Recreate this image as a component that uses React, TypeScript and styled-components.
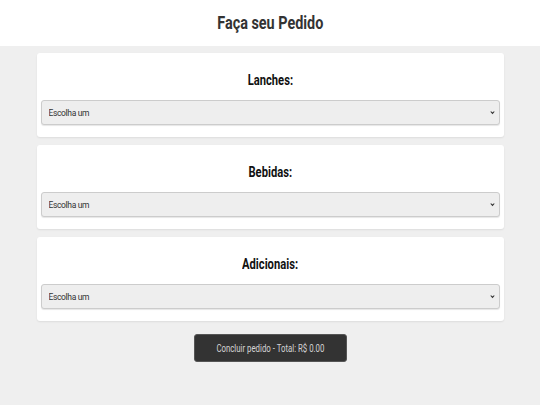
import styled, { createGlobalStyle } from 'styled-components';

const GlobalStyle = createGlobalStyle`
  * {
    margin: 0;
    padding: 0;
    box-sizing: border-box;
  }
  body {
    background: #efefef;
    font-family: Roboto, 'Liberation Sans', sans-serif;
    color: #333;
  }
`;

const Header = styled.header`
  height: 46px;
  background: #fff;
  display: flex;
  align-items: center;
  justify-content: center;
`;

// the reference uses a condensed face, so squeeze the text horizontally
const Condensed = styled.span<{ $scale?: number }>`
  display: inline-block;
  transform: scaleX(${(p) => p.$scale ?? 0.8});
  white-space: nowrap;
`;

const Title = styled.h1`
  font-size: 18px;
  font-weight: 700;
  color: #333;
  line-height: 20px;
`;

const Main = styled.main`
  width: 467px;
  margin: 7px auto 0;
  display: flex;
  flex-direction: column;
  gap: 8px;
`;

const Card = styled.section`
  height: 84px;
  background: #fff;
  border-radius: 3px;
  box-shadow: 0 1px 2px rgba(0, 0, 0, 0.08);
  padding: 19px 4px 12px;
  display: flex;
  flex-direction: column;
  gap: 12px;
`;

const CardTitle = styled.h2`
  font-size: 14px;
  font-weight: 700;
  color: #111;
  text-align: center;
  line-height: 16px;
`;

const SelectWrap = styled.div`
  position: relative;
  height: 25px;
`;

const Select = styled.select`
  appearance: none;
  width: 100%;
  height: 25px;
  background: #eee;
  border: 1px solid #ccc;
  border-radius: 3px;
  padding: 0 7px;
  font-family: inherit;
  font-size: 8.5px;
  letter-spacing: -0.35px;
  color: #333;
  box-shadow: 0 1px 1px rgba(0, 0, 0, 0.1);
  outline: none;
`;

const Chevron = styled.svg`
  position: absolute;
  right: 5px;
  top: 10px;
  width: 5px;
  height: 5px;
  pointer-events: none;
`;

const Footer = styled.div`
  display: flex;
  justify-content: center;
  padding-top: 5px;
`;

const Button = styled.button`
  width: 153px;
  height: 28px;
  display: flex;
  align-items: center;
  justify-content: center;
  padding: 0;
  background: #333;
  color: #d4d4d4;
  border: 1px solid #555;
  border-radius: 3px;
  font-family: inherit;
  font-size: 11.5px;
  cursor: pointer;
`;

const sections = ['Lanches:', 'Bebidas:', 'Adicionais:'];

const App: React.FC = () => {
  return (
    <>
      <GlobalStyle />
      <Header>
        <Title>
          <Condensed>Faça seu Pedido</Condensed>
        </Title>
      </Header>
      <Main>
        {sections.map((s) => (
          <Card key={s}>
            <CardTitle>
              <Condensed>{s}</Condensed>
            </CardTitle>
            <SelectWrap>
              <Select defaultValue="">
                <option value="">Escolha um</option>
              </Select>
              <Chevron viewBox="0 0 10 10">
                <path d="M1.5 3 L5 6.8 L8.5 3" fill="none" stroke="#333" strokeWidth="2.2" />
              </Chevron>
            </SelectWrap>
          </Card>
        ))}
        <Footer>
          <Button>
            <Condensed $scale={0.68}>Concluir pedido - Total: R$ 0.00</Condensed>
          </Button>
        </Footer>
      </Main>
    </>
  );
};

export default App;
